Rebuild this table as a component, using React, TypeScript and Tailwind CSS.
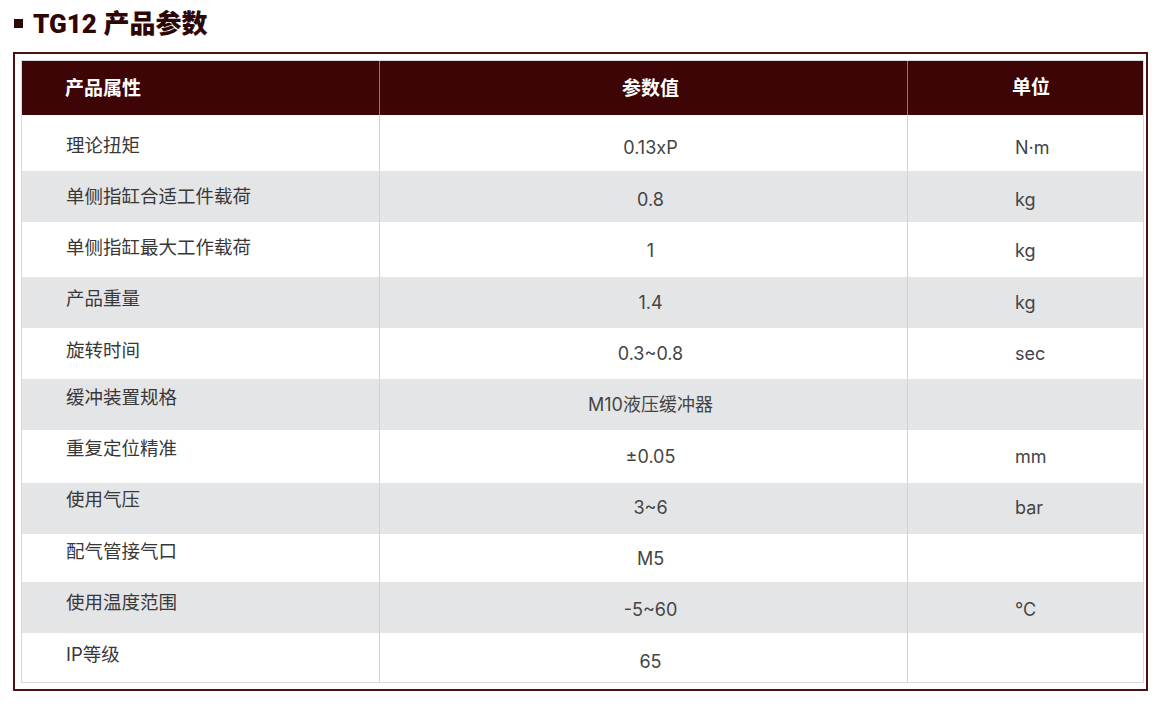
import React from "react";

const rows: { label: string; value: string; unit: string; h: number; lp: number; vp: number }[] = [
  { label: "理论扭矩", value: "0.13xP", unit: "N·m", h: 56, lp: 17, vp: 19 },
  { label: "单侧指缸合适工件载荷", value: "0.8", unit: "kg", h: 51, lp: 12, vp: 15 },
  { label: "单侧指缸最大工作载荷", value: "1", unit: "kg", h: 55, lp: 12, vp: 15 },
  { label: "产品重量", value: "1.4", unit: "kg", h: 51, lp: 8, vp: 12 },
  { label: "旋转时间", value: "0.3~0.8", unit: "sec", h: 51, lp: 9, vp: 12 },
  { label: "缓冲装置规格", value: "M10液压缓冲器", unit: "", h: 51, lp: 5, vp: 12 },
  { label: "重复定位精准", value: "±0.05", unit: "mm", h: 53, lp: 5, vp: 13 },
  { label: "使用气压", value: "3~6", unit: "bar", h: 51, lp: 3, vp: 11 },
  { label: "配气管接气口", value: "M5", unit: "", h: 48, lp: 4, vp: 11 },
  { label: "使用温度范围", value: "-5~60", unit: "℃", h: 51, lp: 7, vp: 14 },
  { label: "IP等级", value: "65", unit: "", h: 49, lp: 8, vp: 15 },
];

const font = {
  fontFamily: '"Inter", "Noto Sans CJK SC", sans-serif',
};

export default function App() {
  return (
    <div className="w-[1165px] h-[709px] bg-white" style={font}>
      <div className="flex items-center h-[46px] pl-[14px] pt-[1px]">
        <div className="w-[9px] h-[9px] bg-[#2e0606]" />
        <div
          className="ml-[10px] text-[26px] font-black leading-none text-[#2e0606]"
          style={{ fontFamily: 'Roboto, "Noto Sans CJK SC", sans-serif' }}
        >
          TG12 产品参数
        </div>
      </div>
      <div className="ml-[13px] mt-[6px] w-[1135px] border-2 border-[#4a1212] pt-[6px] pl-[6px] pr-[2px] pb-[6px]">
        <div className="border border-[#d9d9d9]">
          <div className="grid grid-cols-[357px_528px_1fr] h-[54px] bg-[#3d0505] text-white text-[19px] font-bold">
            <div className="flex items-center pl-[43px] pt-[2px]">产品属性</div>
            <div className="flex items-center justify-center border-l border-[#8a7a7a] pt-[2px] pl-[14px]">参数值</div>
            <div className="flex items-center border-l border-[#8a7a7a] pl-[104px]">单位</div>
          </div>
          {rows.map((r, i) => (
            <div
              key={i}
              className={`grid grid-cols-[357px_528px_1fr] ${i % 2 === 1 ? "bg-[#e4e5e7]" : "bg-white"}`}
              style={{ height: r.h }}
            >
              <div className="pl-[44px] text-[18.5px] text-[#383838]" style={{ paddingTop: r.lp }}>
                {r.label}
              </div>
              <div
                className="text-center border-l border-[#d2d2d2] pl-[14px] text-[18px] text-[#444]"
                style={{ paddingTop: r.vp }}
              >
                {r.value}
              </div>
              <div
                className="border-l border-[#d2d2d2] pl-[107px] text-[18px] text-[#444]"
                style={{ paddingTop: r.vp }}
              >
                {r.unit}
              </div>
            </div>
          ))}
        </div>
      </div>
    </div>
  );
}
